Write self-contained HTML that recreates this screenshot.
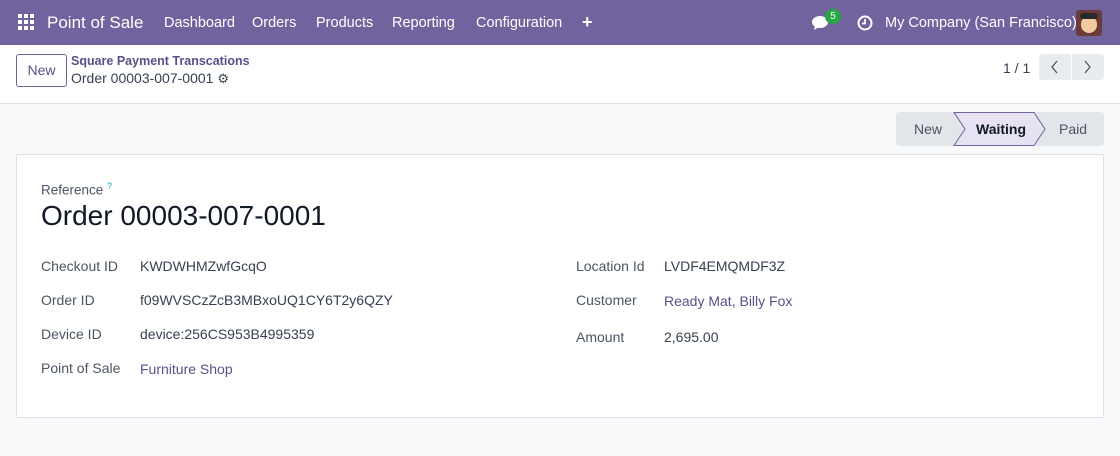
<!DOCTYPE html>
<html><head><meta charset="utf-8"><style>
*{box-sizing:border-box;margin:0;padding:0}
body{width:1120px;height:456px;overflow:hidden;background:#f8f9fa;font-family:"Liberation Sans",sans-serif;color:#374151;font-size:14px;position:relative}
.nav{position:absolute;left:0;top:0;width:1120px;height:45px;background:#71639e;color:#fff}
.nav span{position:absolute;top:15px;font-size:14.5px}
.cp{position:absolute;top:45px;left:0;width:1120px;height:59px;background:#fff;border-bottom:1px solid #dee2e6}
.a{position:absolute}
.card{position:absolute;left:16px;top:154px;width:1088px;height:264px;background:#fff;border:1px solid #dee2e6;border-radius:2px}
.lbl{position:absolute;color:#4b5563;font-size:14px}
.val{position:absolute;color:#374151;font-size:14px}
.lnk{color:#5a4f8a}
</style></head><body>
<div class="nav">
<svg class="a" style="left:18px;top:14px" width="16" height="16" viewBox="0 0 16 16" fill="#fff"><rect x="0" y="0" width="4" height="4"/><rect x="6" y="0" width="4" height="4"/><rect x="12" y="0" width="4" height="4"/><rect x="0" y="6" width="4" height="4"/><rect x="6" y="6" width="4" height="4"/><rect x="12" y="6" width="4" height="4"/><rect x="0" y="12" width="4" height="4"/><rect x="6" y="12" width="4" height="4"/><rect x="12" y="12" width="4" height="4"/></svg>
<span style="left:47px;top:13px;font-size:17px">Point of Sale</span>
<span style="left:164px">Dashboard</span>
<span style="left:252px">Orders</span>
<span style="left:316px">Products</span>
<span style="left:392px">Reporting</span>
<span style="left:476px">Configuration</span>
<span style="left:582px;top:12px;font-size:18px;font-weight:bold">+</span>
<svg class="a" style="left:812px;top:15px" width="20" height="16" viewBox="0 0 20 16" fill="#fff"><ellipse cx="8" cy="7" rx="8" ry="6"/><path d="M3 11 L2 15 L7 12Z"/></svg>
<div class="a" style="left:825px;top:9px;width:16px;height:15px;border-radius:8px;background:#28a745;font-size:10px;text-align:center;line-height:15px">5</div>
<svg class="a" style="left:857px;top:15px" width="16" height="16" viewBox="0 0 16 16"><circle cx="8" cy="8" r="6.5" fill="none" stroke="#fff" stroke-width="2"/><path d="M8 4V8.5H5" stroke="#fff" stroke-width="1.8" fill="none"/></svg>
<span style="left:885px">My Company (San Francisco)</span>
<div class="a" style="left:1076px;top:10px;width:26px;height:26px;border-radius:3px;background:#6b3b3b"><div class="a" style="left:5px;top:6px;width:16px;height:17px;border-radius:8px;background:#f2c9a0"></div><div class="a" style="left:4px;top:3px;width:18px;height:6px;border-radius:4px;background:#2a2a2a"></div></div>
</div>
<div class="cp">
<div class="a" style="left:16px;top:9px;width:51px;height:33px;border:1px solid #71639e;border-radius:3px;color:#5a4f8a;text-align:center;line-height:31px;font-size:14px">New</div>
<div class="a lnk" style="left:71px;top:9px;font-size:12.5px;font-weight:bold">Square Payment Transcations</div>
<div class="a" style="left:71px;top:25px;font-size:14px;color:#374151">Order 00003-007-0001 <span style="font-size:13px">⚙</span></div>
<div class="a" style="left:1003px;top:15px;font-size:14px">1 / 1</div>
<div class="a" style="left:1039px;top:9px;width:65px;height:26px;background:#e9ecef;border-radius:3px"></div>
<div class="a" style="left:1071px;top:9px;width:1px;height:26px;background:#fff"></div>
<svg class="a" style="left:1050px;top:15px" width="10" height="14"><path d="M7 1L2 7L7 13" stroke="#555" fill="none" stroke-width="1.3"/></svg>
<svg class="a" style="left:1082px;top:15px" width="10" height="14"><path d="M3 1L8 7L3 13" stroke="#555" fill="none" stroke-width="1.3"/></svg>
</div>
<svg class="a" style="left:896px;top:112px" width="208" height="34">
<rect x="0" y="0" width="208" height="34" rx="3" fill="#e2e5e9"/>
<path d="M58 0.5H138L149 17L138 33.5H58L69 17Z" fill="#e6e2f1" stroke="#71639e" stroke-width="1"/>
<text x="18" y="22" font-family="Liberation Sans" font-size="14" fill="#4b5563">New</text>
<text x="80" y="22" font-family="Liberation Sans" font-size="14" font-weight="bold" fill="#111827">Waiting</text>
<text x="163" y="22" font-family="Liberation Sans" font-size="14" fill="#4b5563">Paid</text>
</svg>
<div class="card">
<div class="lbl" style="left:24px;top:26px;font-size:13.5px">Reference <sup style="color:#17a2b8;font-size:9px">?</sup></div>
<div class="a" style="left:24px;top:45px;font-size:28px;color:#111827">Order 00003-007-0001</div>
<div class="lbl" style="left:24px;top:103px">Checkout ID</div><div class="val" style="left:123px;top:103px">KWDWHMZwfGcqO</div>
<div class="lbl" style="left:24px;top:137px">Order ID</div><div class="val" style="left:123px;top:137px">f09WVSCzZcB3MBxoUQ1CY6T2y6QZY</div>
<div class="lbl" style="left:24px;top:171px">Device ID</div><div class="val" style="left:123px;top:171px">device:256CS953B4995359</div>
<div class="lbl" style="left:24px;top:205px">Point of Sale</div><div class="val lnk" style="left:123px;top:206px">Furniture Shop</div>
<div class="lbl" style="left:559px;top:103px">Location Id</div><div class="val" style="left:647px;top:103px">LVDF4EMQMDF3Z</div>
<div class="lbl" style="left:559px;top:137px">Customer</div><div class="val lnk" style="left:647px;top:138px">Ready Mat, Billy Fox</div>
<div class="lbl" style="left:559px;top:174px">Amount</div><div class="val" style="left:647px;top:174px">2,695.00</div>
</div>
</body></html>
